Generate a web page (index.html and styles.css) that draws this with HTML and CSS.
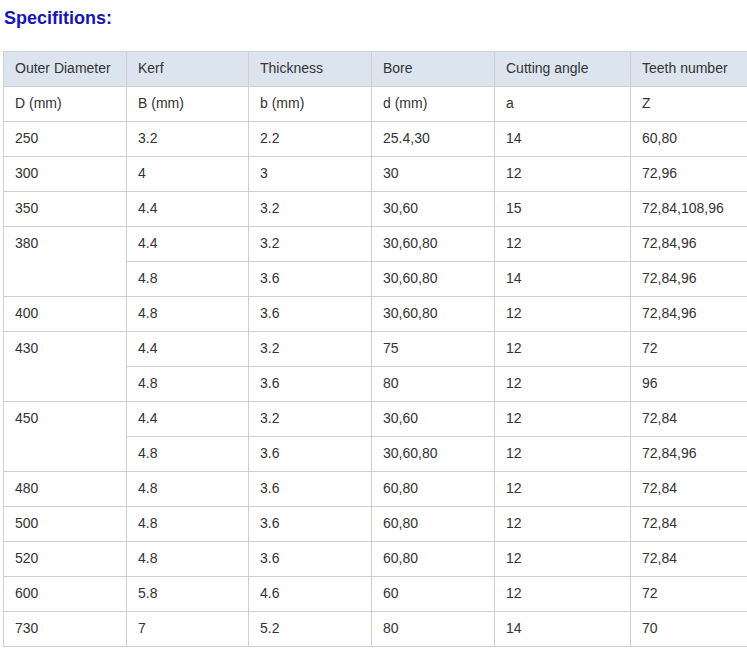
FILE: index.html
```html
<!DOCTYPE html>
<html>
<head>
<meta charset="utf-8">
<link rel="stylesheet" href="styles.css">
</head>
<body>
<h2 class="title">Specifitions:</h2>
<div class="wrap">
<table class="spec">
<colgroup>
<col class="c1"><col class="c2"><col class="c3"><col class="c4"><col class="c5"><col class="c6">
</colgroup>
<thead>
<tr class="head"><td>Outer Diameter</td><td>Kerf</td><td>Thickness</td><td>Bore</td><td>Cutting angle</td><td>Teeth number</td></tr>
</thead>
<tbody>
<tr><td>D (mm)</td><td>B (mm)</td><td>b (mm)</td><td>d (mm)</td><td>a</td><td>Z</td></tr>
<tr><td>250</td><td>3.2</td><td>2.2</td><td>25.4,30</td><td>14</td><td>60,80</td></tr>
<tr><td>300</td><td>4</td><td>3</td><td>30</td><td>12</td><td>72,96</td></tr>
<tr><td>350</td><td>4.4</td><td>3.2</td><td>30,60</td><td>15</td><td>72,84,108,96</td></tr>
<tr><td rowspan="2" class="top">380</td><td>4.4</td><td>3.2</td><td>30,60,80</td><td>12</td><td>72,84,96</td></tr>
<tr><td>4.8</td><td>3.6</td><td>30,60,80</td><td>14</td><td>72,84,96</td></tr>
<tr><td>400</td><td>4.8</td><td>3.6</td><td>30,60,80</td><td>12</td><td>72,84,96</td></tr>
<tr><td rowspan="2" class="top">430</td><td>4.4</td><td>3.2</td><td>75</td><td>12</td><td>72</td></tr>
<tr><td>4.8</td><td>3.6</td><td>80</td><td>12</td><td>96</td></tr>
<tr><td rowspan="2" class="top">450</td><td>4.4</td><td>3.2</td><td>30,60</td><td>12</td><td>72,84</td></tr>
<tr><td>4.8</td><td>3.6</td><td>30,60,80</td><td>12</td><td>72,84,96</td></tr>
<tr><td>480</td><td>4.8</td><td>3.6</td><td>60,80</td><td>12</td><td>72,84</td></tr>
<tr><td>500</td><td>4.8</td><td>3.6</td><td>60,80</td><td>12</td><td>72,84</td></tr>
<tr><td>520</td><td>4.8</td><td>3.6</td><td>60,80</td><td>12</td><td>72,84</td></tr>
<tr><td>600</td><td>5.8</td><td>4.6</td><td>60</td><td>12</td><td>72</td></tr>
<tr><td>730</td><td>7</td><td>5.2</td><td>80</td><td>14</td><td>70</td></tr>
</tbody>
</table>
</div>
</body>
</html>
```

FILE: styles.css
```css
html, body {
  margin: 0;
  padding: 0;
  background: #fff;
  overflow: hidden;
}
body {
  padding: 0 0 0 3px;
  font-family: "Liberation Sans", Arial, sans-serif;
}
.title {
  margin: 0;
  padding: 7px 0 0 1px;
  height: 51px;
  box-sizing: border-box;
  font-size: 18px;
  font-weight: bold;
  color: #1616b4;
  line-height: 22px;
}
.wrap {
  width: 744px;
  overflow: hidden;
}
.spec {
  border-collapse: collapse;
  table-layout: fixed;
  width: 760px;
  font-size: 14px;
  color: #333;
}
.c1 { width: 123px; }
.c2 { width: 122px; }
.c3 { width: 123px; }
.c4 { width: 123px; }
.c5 { width: 136px; }
.c6 { width: 133px; }
.spec td {
  border: 1px solid #cfcfcf;
  height: 35px;
  padding: 0 0 2px 11px;
  box-sizing: border-box;
  vertical-align: middle;
  white-space: nowrap;
}
.spec td.top {
  vertical-align: top;
  padding-top: 8px;
}
.head td {
  background: #dce5ef;
}
```
